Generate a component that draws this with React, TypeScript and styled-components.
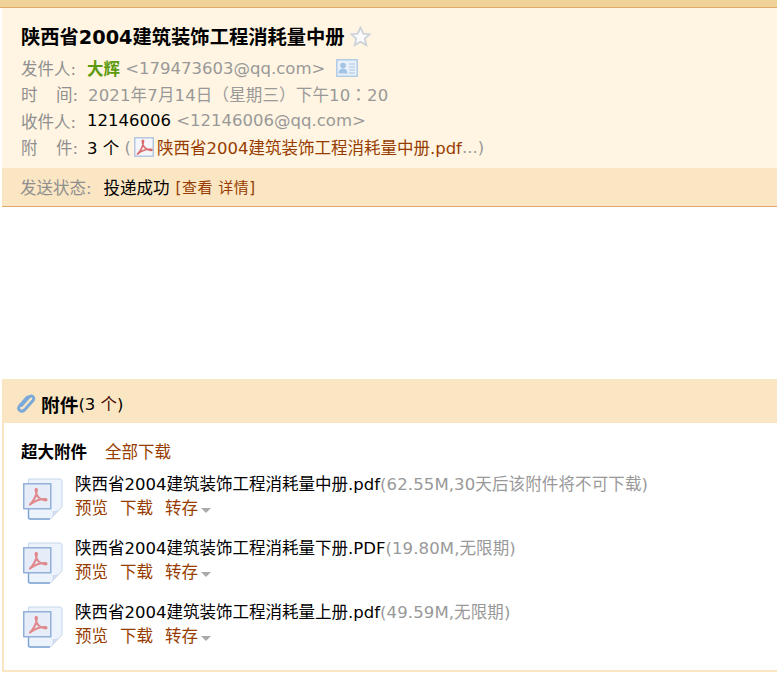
import styled, { createGlobalStyle } from "styled-components"

const GlobalStyle = createGlobalStyle`
  html, body {
    margin: 0;
    padding: 0;
    background: #fff;
    overflow: hidden;
  }
  body {
    font-family: "DejaVu Sans", "Noto Sans CJK SC", sans-serif;
    font-size: 16.5px;
    color: #000;
  }
`

const Page = styled.div`
  width: 777px;
  height: 689px;
  padding-left: 2px;
  box-sizing: border-box;
`

const TopBar = styled.div`
  height: 7px;
  margin-left: -2px;
  background: #f0d298;
  border-bottom: 1px solid #dfa968;
`

const Head = styled.div`
  background: #fff5e2;
  padding: 14px 0 0 19px;
  height: 160px;
  box-sizing: border-box;
`

const Title = styled.h1`
  margin: 0 0 5px;
  display: flex;
  align-items: center;
  gap: 5px;
  height: 28px;
  font-size: 19.3px;
  font-weight: 700;
`

const Row = styled.div`
  display: flex;
  align-items: center;
  height: 26.33px;
  white-space: pre;
`

const Label = styled.span`
  color: #8f8f8f;
  width: 57px;
  margin-right: 9px;
  display: flex;
  justify-content: space-between;
`

const Gray = styled.span`
  color: #999;
`

const DateText = styled(Gray)`
  letter-spacing: 0.15px;
  margin-left: 1px;
`

const Colon = styled.span`
  font-family: "Noto Sans CJK TC", sans-serif;
`

const Meta = styled(Gray)`
  letter-spacing: 0.12px;
`

const Sender = styled.b`
  color: #5c9a0e;
`

const Link = styled.a`
  color: #973c00;
`

const Status = styled.div`
  display: flex;
  align-items: center;
  height: 39px;
  box-sizing: border-box;
  padding: 0 0 1px 18px;
  background: #fae6c3;
  border-bottom: 1px solid #e0a96b;
  white-space: pre;
`

const StatusLabel = styled.span`
  color: #8f8f8f;
  margin-right: 12px;
`

const StatusValue = styled.span`
  margin-right: 6px;
`

const Detail = styled(Link)`
  font-size: 15px;
  letter-spacing: 0.5px;
`

const Body = styled.div`
  height: 172px;
`

const Attach = styled.section`
  height: 293px;
  box-sizing: border-box;
  border-left: 2px solid #fae6c3;
  border-bottom: 2px solid #fae6c3;
`

const AttachHead = styled.div`
  display: flex;
  align-items: center;
  height: 44px;
  box-sizing: border-box;
  margin-left: -2px;
  padding: 4px 0 0 13px;
  background: #fae6c3;
`

const AttachTitle = styled.b`
  font-size: 18.7px;
  margin-left: 3px;
`

const AttachCount = styled.span`
  font-size: 16.5px;
`

const Small = styled.span`
  color: #4a0a00;
`

const GroupHead = styled.div`
  display: flex;
  align-items: center;
  gap: 18px;
  height: 26px;
  margin: 15px 0 0 17px;
`

const FileList = styled.div`
  margin-top: 9px;
`

const FileRow = styled.div`
  display: flex;
  height: 64px;
  padding-left: 19px;
  gap: 12px;
`

const FileIcon = styled.span`
  display: inline-flex;
  flex: none;
  margin-top: 5px;
  height: 42px;
`

const FileInfo = styled.div`
  display: flex;
  flex-direction: column;
  line-height: 24px;
`

const FileName = styled.div`
  white-space: pre;
`

const Actions = styled.div`
  display: flex;
  align-items: center;
  gap: 12px;
`

const Save = styled.span`
  display: flex;
  align-items: center;
  gap: 3px;
`

const Caret = styled.i`
  width: 0;
  height: 0;
  margin-top: 3px;
  border-left: 5px solid transparent;
  border-right: 5px solid transparent;
  border-top: 5px solid #aaa;
`

const IconSlot = styled.span`
  display: inline-flex;
  flex: none;
`

const CardSlot = styled(IconSlot)`
  margin-left: 11px;
`

const PdfSlot = styled(IconSlot)`
  margin: 0 3px;
`

const Star = () => (
  <svg width="21" height="21" viewBox="0 0 21 21">
    <path
      d="M10.500 1.500l2.700 6.100 6.600.6-5 4.400 1.500 6.500-5.800-3.400-5.800 3.400 1.500-6.500-5-4.400 6.600-.6z"
      fill="#fbfbfb"
      stroke="#ccd2da"
      strokeWidth="1.800"
    />
  </svg>
)

const Card = () => (
  <svg width="22" height="18" viewBox="0 0 22 18">
    <rect x="0.75" y="0.75" width="20.500" height="16.500" fill="#e8f1fa" stroke="#b2cce6" strokeWidth="1.500" />
    <circle cx="7" cy="6.500" r="2.800" fill="#a3c4e5" />
    <path d="M2.500 14.500c0-3.500 2-5 4.500-5s4.500 1.500 4.500 5z" fill="#a3c4e5" />
    <path d="M13 5h6M13 8h6M13 11h6M13 14h6" stroke="#a9c6e2" strokeWidth="1.200" />
  </svg>
)

// acrobat mark, drawn in a 20 x 20 box
const Acrobat = ({ color, sw }: { color: string; sw: number }) => (
  <path
    d="M3.500 17C6.500 14 9 9 9.500 4.500c.1-1.500-1.300-1.500-1.200 0 .4 4.500 3 8.300 8.700 9 1.200 0 1.200-1.200 0-1.200-4.500-.3-9 1-13.500 4.700z"
    fill="none"
    stroke={color}
    strokeWidth={sw}
    strokeLinejoin="round"
  />
)

const PdfSmall = () => (
  <svg width="20" height="20" viewBox="0 0 20 20">
    <rect x="0.75" y="0.75" width="18.500" height="18.500" fill="#f4f6fc" stroke="#b5c7de" strokeWidth="1.500" />
    <Acrobat color="#dc6a6a" sw={1.700} />
  </svg>
)

const PdfLarge = () => (
  <svg width="40" height="42" viewBox="0 0 40 42">
    <path
      d="M5.500 1h31.500a2 2 0 0 1 2 2v26l-11.500 12h-20a2 2 0 0 1-2-2z"
      fill="#edf3fc"
      stroke="#c4d6ec"
    />
    <path d="M27.500 41c2-2 2.500-5 2-8 3 .5 6-.5 9-3.500z" fill="#cfddf0" />
    <path d="M5.500 30v9.500a1.500 1.500 0 0 0 1.500 1.500h20" fill="none" stroke="#7fa3d2" strokeWidth="1.500" />
    <rect x="0.75" y="5.750" width="27" height="25" fill="#e6edf8" stroke="#93b0d8" strokeWidth="1.500" />
    <g transform="translate(3 7) scale(1.15)">
      <Acrobat color="#e08a8e" sw={1.800} />
    </g>
  </svg>
)

const Clip = () => (
  <svg width="23" height="22" viewBox="0 0 22 22">
    <path
      d="M6 13.500l7.500-8.500c2.500-2.500 6.500.5 4 3.500l-8.500 9.500c-3.500 3-7.500-.5-5-4l8-9"
      fill="none"
      stroke="#7aa9d9"
      strokeWidth="3"
      strokeLinecap="round"
    />
  </svg>
)

const files = [
  { name: "陕西省2004建筑装饰工程消耗量中册.pdf", meta: "(62.55M,30天后该附件将不可下载)" },
  { name: "陕西省2004建筑装饰工程消耗量下册.PDF", meta: "(19.80M,无限期)" },
  { name: "陕西省2004建筑装饰工程消耗量上册.pdf", meta: "(49.59M,无限期)" },
]

const App = () => {
  return (
    <Page>
      <GlobalStyle />
      <TopBar />
      <Head>
        <Title>
          陕西省2004建筑装饰工程消耗量中册
          <IconSlot>
            <Star />
          </IconSlot>
        </Title>
        <Row>
          <Label>发件人:</Label>
          <Sender>大辉</Sender>
          <Gray> &lt;179473603@qq.com&gt;</Gray>
          <CardSlot>
            <Card />
          </CardSlot>
        </Row>
        <Row>
          <Label>
            <span>时</span>
            <span>间:</span>
          </Label>
          <DateText>
            2021年7月14日（星期三）下午10<Colon>：</Colon>20
          </DateText>
        </Row>
        <Row>
          <Label>收件人:</Label>
          <span>12146006</span>
          <Gray> &lt;12146006@qq.com&gt;</Gray>
        </Row>
        <Row>
          <Label>
            <span>附</span>
            <span>件:</span>
          </Label>
          <span>3 个 </span>
          <Gray>(</Gray>
          <PdfSlot>
            <PdfSmall />
          </PdfSlot>
          <Link>陕西省2004建筑装饰工程消耗量中册.pdf</Link>
          <Gray>...)</Gray>
        </Row>
      </Head>
      <Status>
        <StatusLabel>发送状态:</StatusLabel>
        <StatusValue>投递成功</StatusValue>
        <Detail>[查看 详情]</Detail>
      </Status>
      <Body />
      <Attach>
        <AttachHead>
          <Clip />
          <AttachTitle>附件</AttachTitle>
          <AttachCount>
            (3 <Small>个</Small>)
          </AttachCount>
        </AttachHead>
        <GroupHead>
          <b>超大附件</b>
          <Link>全部下载</Link>
        </GroupHead>
        <FileList>
          {files.map((f) => (
            <FileRow key={f.name}>
              <FileIcon>
                <PdfLarge />
              </FileIcon>
              <FileInfo>
                <FileName>
                  {f.name}
                  <Meta>{f.meta}</Meta>
                </FileName>
                <Actions>
                  <Link>预览</Link>
                  <Link>下载</Link>
                  <Save>
                    <Link>转存</Link>
                    <Caret />
                  </Save>
                </Actions>
              </FileInfo>
            </FileRow>
          ))}
        </FileList>
      </Attach>
    </Page>
  )
}

export default App
